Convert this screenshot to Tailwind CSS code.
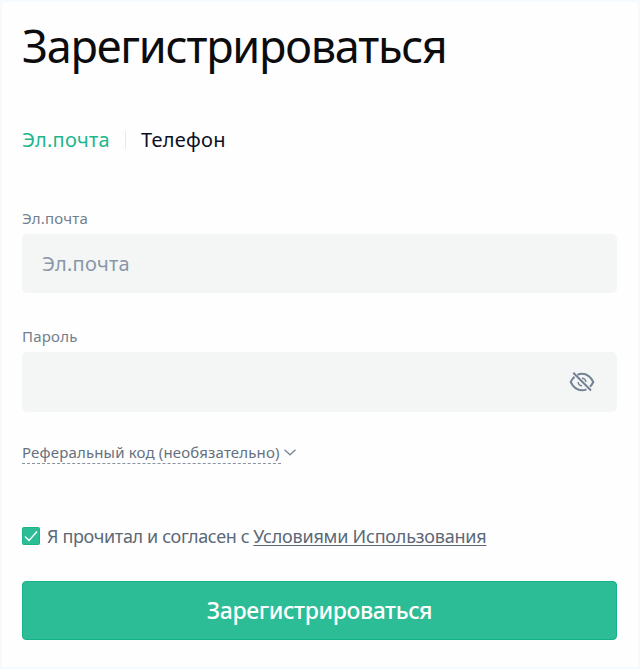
<!DOCTYPE html>
<html lang="ru">
<head>
    <meta charset="UTF-8">
    <meta name="viewport" content="width=device-width, initial-scale=1.0">
    <title>Зарегистрироваться</title>
    <script src="https://cdn.jsdelivr.net/npm/@tailwindcss/browser@4"></script>
</head>
<body class="bg-[#f5faff] font-['Noto_Sans',sans-serif]">
    <main class="w-[640px] h-[669px] p-0.5 overflow-hidden">
        <section class="flex flex-col h-full bg-[#fefefe] pl-5 pr-[21px]">
            <h1 class="mt-[15px] h-[58px] leading-[58px] text-[45px] text-[#0c0c0e] tracking-[-1.22px] whitespace-nowrap">Зарегистрироваться</h1>

            <!-- Tabs -->
            <div class="mt-[49px] flex items-center h-8 text-xl leading-8 tracking-[0.25px] whitespace-nowrap">
                <button class="w-[103px] text-left text-[#20b68c]">Эл.почта</button>
                <span class="w-px h-[18px] bg-[#e6e8eb]"></span>
                <button class="ml-[15px] text-[#0c0f24]">Телефон</button>
            </div>

            <form>
                <label for="email" class="block mt-[50px] h-6 leading-6 text-[15px] tracking-[0.2px] text-[#707f8f]">Эл.почта</label>
                <input type="text" id="email" class="block mt-1 w-full h-[59px] px-5 rounded-[5px] bg-[#f4f6f6] text-xl tracking-[0.25px] placeholder:text-[#8a97a8] placeholder:opacity-100" placeholder="Эл.почта">

                <label for="password" class="block mt-[31px] h-6 leading-6 text-[15px] tracking-[0.2px] text-[#707f8f]">Пароль</label>
                <div class="mt-1 flex items-center h-[60px] pr-[22px] rounded-[5px] bg-[#f4f6f6]">
                    <input type="password" id="password" class="flex-1 h-full px-5 bg-transparent text-xl">
                    <svg class="w-[26px] h-[22px]" viewBox="0 0 26 22" fill="none" stroke="#728294" stroke-width="2">
                        <path d="M8.500 3.800C9.800 3.100 11.300 2.700 13 2.700c4.700 0 8.700 3 11.300 8.300-.9 1.900-2 3.500-3.300 4.700M17.500 18.300c-1.400.700-2.900 1-4.500 1-4.700 0-8.700-3-11.300-8.300 1.100-2.200 2.300-3.900 3.800-5.200"/>
                        <path d="M13 7.200a3.800 3.800 0 0 1 3.800 3.800M13 14.800A3.800 3.800 0 0 1 9.200 11" stroke-width="1.500"/>
                        <path d="M4.300 1.800 22 19.500"/>
                    </svg>
                </div>

                <!-- Referral code -->
                <div class="mt-7 flex items-center h-6">
                    <span class="h-6 w-[259px] leading-6 border-b border-dashed border-[#8793a0] text-[15px] tracking-[0.16px] text-[#66717e] whitespace-nowrap">Реферальный код (необязательно)</span>
                    <svg class="ml-[3px] w-[12px] h-[7px]" viewBox="0 0 12 7" fill="none" stroke="#7b8794" stroke-width="1.400"><path d="m.5.7 5.500 5 5.500-5"/></svg>
                </div>

                <div class="mt-[57px] flex items-center h-[30px] text-lg leading-[30px] text-[#5b6877] whitespace-nowrap">
                    <svg class="w-[18px] h-[18px] mr-[7px]" viewBox="0 0 18 18" fill="none"><rect x=".5" y=".5" width="17" height="17" rx="1" fill="#2dbd96" stroke="#1cb389"/><path d="m3 9.500 4 4L15 4.500" stroke="#fff" stroke-width="1.300"/></svg>
                    <span class="tracking-[-0.35px]">Я прочитал и согласен с</span>
                    <a href="#" class="ml-1 tracking-[-0.22px] underline underline-offset-2">Условиями Использования</a>
                </div>

                <button type="button" class="block mt-[30px] w-full h-[59px] rounded border border-[#16b287] bg-[#2dbd96] text-[23px] tracking-[-0.4px] text-white font-medium">Зарегистрироваться</button>
            </form>
        </section>
    </main>
</body>
</html>
